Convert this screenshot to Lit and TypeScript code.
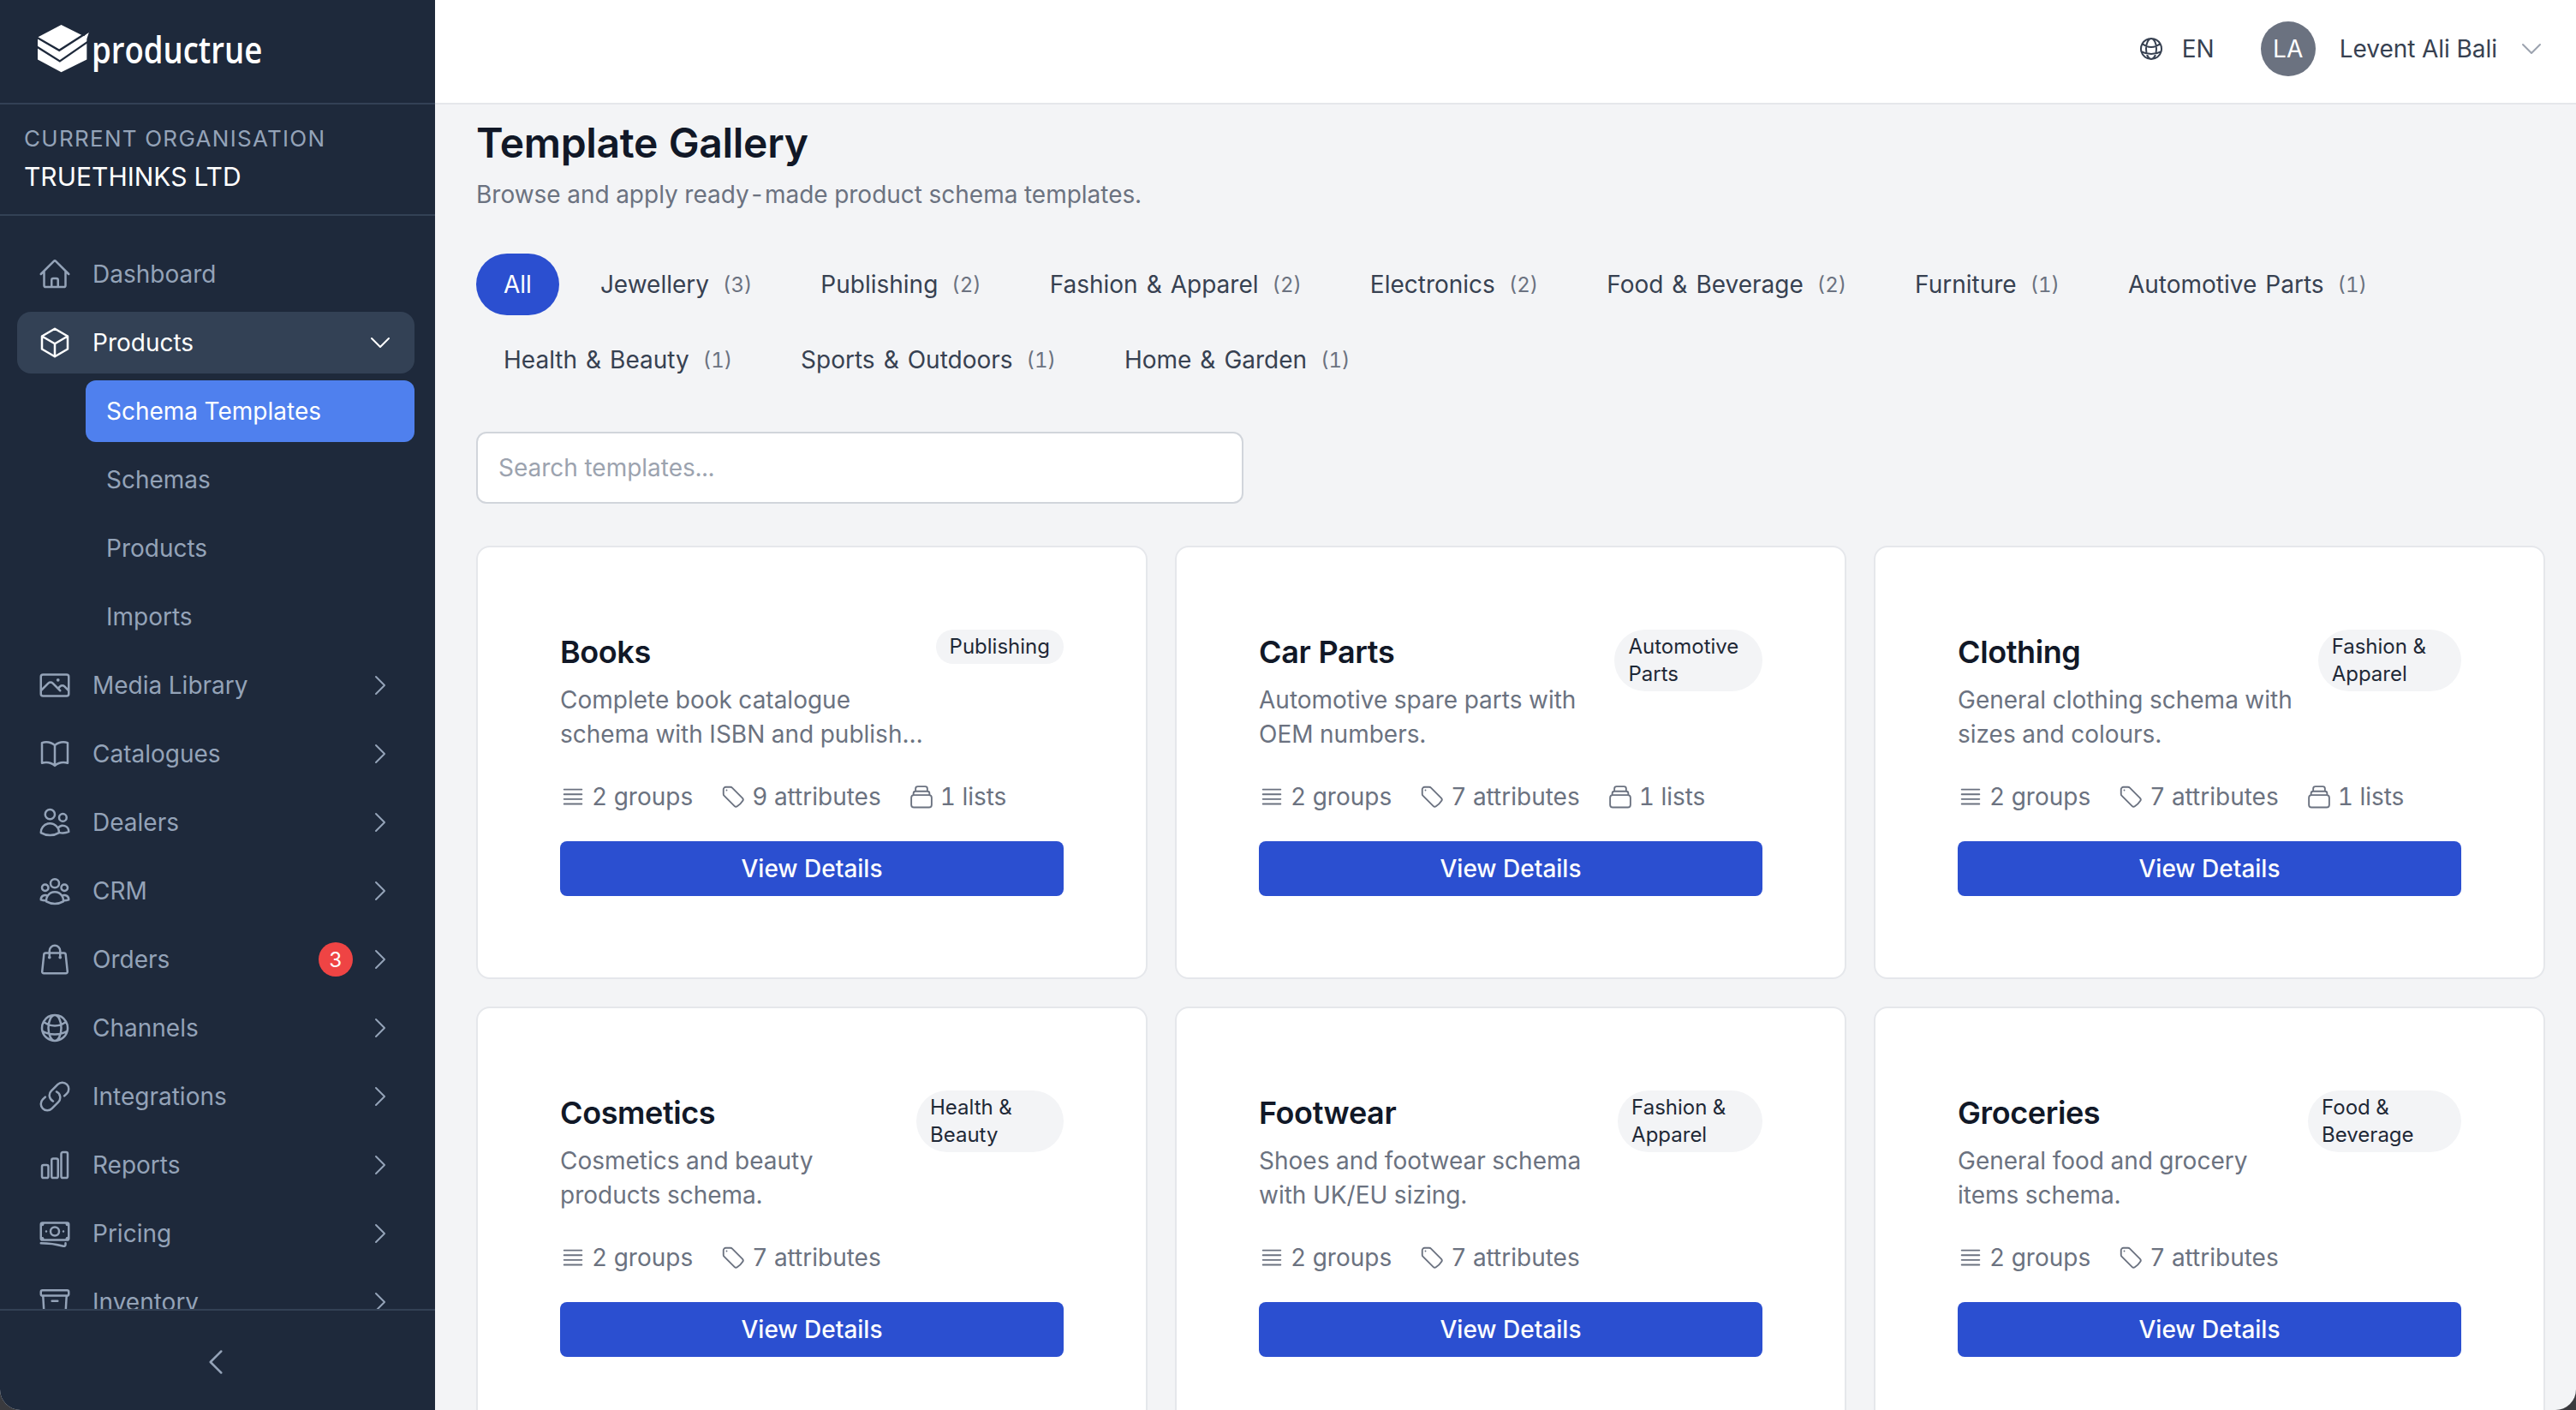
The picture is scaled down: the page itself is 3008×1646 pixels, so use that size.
import { LitElement, html, css, svg } from "lit";
import { customElement } from "lit/decorators.js";

const P: Record<string, string> = {
  home: "m2.25 12 8.954-8.955c.44-.439 1.152-.439 1.591 0L21.75 12M4.5 9.75v10.125c0 .621.504 1.125 1.125 1.125H9.75v-4.875c0-.621.504-1.125 1.125-1.125h2.25c.621 0 1.125.504 1.125 1.125V21h4.125c.621 0 1.125-.504 1.125-1.125V9.75M8.25 21h8.25",
  cube: "m21 7.5-9-5.25L3 7.5m18 0-9 5.25m9-5.25v9l-9 5.25M3 7.5l9 5.25M3 7.5v9l9 5.25m0-9v9",
  photo: "m2.25 15.75 5.159-5.159a2.25 2.25 0 0 1 3.182 0l5.159 5.159m-1.5-1.5 1.409-1.409a2.25 2.25 0 0 1 3.182 0l2.909 2.909m-18 3.75h16.5a1.5 1.5 0 0 0 1.5-1.5V6a1.5 1.5 0 0 0-1.5-1.5H3.75A1.5 1.5 0 0 0 2.25 6v12a1.5 1.5 0 0 0 1.5 1.5Zm10.5-11.25h.008v.008h-.008V8.25Zm.375 0a.375.375 0 1 1-.75 0 .375.375 0 0 1 .75 0Z",
  book: "M12 6.042A8.967 8.967 0 0 0 6 3.75c-1.052 0-2.062.18-3 .512v14.25A8.987 8.987 0 0 1 6 18c2.305 0 4.408.867 6 2.292m0-14.25a8.966 8.966 0 0 1 6-2.292c1.052 0 2.062.18 3 .512v14.25A8.987 8.987 0 0 0 18 18a8.967 8.967 0 0 0-6 2.292m0-14.25v14.25",
  users: "M15 19.128a9.38 9.38 0 0 0 2.625.372 9.337 9.337 0 0 0 4.121-.952 4.125 4.125 0 0 0-7.533-2.493M15 19.128v-.003c0-1.113-.285-2.16-.786-3.07M15 19.128v.106A12.318 12.318 0 0 1 8.624 21c-2.331 0-4.512-.645-6.374-1.766l-.001-.109a6.375 6.375 0 0 1 11.964-3.07M12 6.375a3.375 3.375 0 1 1-6.75 0 3.375 3.375 0 0 1 6.75 0Zm8.25 2.25a2.625 2.625 0 1 1-5.25 0 2.625 2.625 0 0 1 5.25 0Z",
  group: "M18 18.72a9.094 9.094 0 0 0 3.741-.479 3 3 0 0 0-4.682-2.72m.94 3.198.001.031c0 .225-.012.447-.037.666A11.944 11.944 0 0 1 12 21c-2.17 0-4.207-.576-5.963-1.584A6.062 6.062 0 0 1 6 18.719m12 0a5.971 5.971 0 0 0-.941-3.197m0 0A5.995 5.995 0 0 0 12 12.75a5.995 5.995 0 0 0-5.058 2.772m0 0a3 3 0 0 0-4.681 2.72 8.986 8.986 0 0 0 3.74.477m.94-3.197a5.971 5.971 0 0 0-.94 3.197M15 6.75a3 3 0 1 1-6 0 3 3 0 0 1 6 0Zm6 3a2.25 2.25 0 1 1-4.5 0 2.25 2.25 0 0 1 4.5 0Zm-13.5 0a2.25 2.25 0 1 1-4.5 0 2.25 2.25 0 0 1 4.5 0Z",
  bag: "M15.75 10.5V6a3.75 3.75 0 1 0-7.5 0v4.5m11.356-1.993 1.263 12c.07.665-.45 1.243-1.119 1.243H4.25a1.125 1.125 0 0 1-1.12-1.243l1.264-12A1.125 1.125 0 0 1 5.513 7.5h12.974c.576 0 1.059.435 1.119 1.007ZM8.625 10.5a.375.375 0 1 1-.75 0 .375.375 0 0 1 .75 0Zm7.5 0a.375.375 0 1 1-.75 0 .375.375 0 0 1 .75 0Z",
  globe: "M12 21a9.004 9.004 0 0 0 8.716-6.747M12 21a9.004 9.004 0 0 1-8.716-6.747M12 21c2.485 0 4.5-4.03 4.5-9S14.485 3 12 3m0 18c-2.485 0-4.5-4.03-4.5-9S9.515 3 12 3m0 0a8.997 8.997 0 0 1 7.843 4.582M12 3a8.997 8.997 0 0 0-7.843 4.582m15.686 0A11.953 11.953 0 0 1 12 10.5c-2.998 0-5.74-1.1-7.843-2.918m15.686 0A8.959 8.959 0 0 1 21 12c0 .778-.099 1.533-.284 2.253m0 0A17.919 17.919 0 0 1 12 16.5c-3.162 0-6.133-.815-8.716-2.247m0 0A9.015 9.015 0 0 1 3 12c0-1.605.42-3.113 1.157-4.418",
  link: "M13.19 8.688a4.5 4.5 0 0 1 1.242 7.244l-4.5 4.5a4.5 4.5 0 0 1-6.364-6.364l1.757-1.757m13.35-.622 1.757-1.757a4.5 4.5 0 0 0-6.364-6.364l-4.5 4.5a4.5 4.5 0 0 0 1.242 7.244",
  chart: "M3 13.125C3 12.504 3.504 12 4.125 12h2.25c.621 0 1.125.504 1.125 1.125v6.75C7.5 20.496 6.996 21 6.375 21h-2.25A1.125 1.125 0 0 1 3 19.875v-6.75ZM9.75 8.625c0-.621.504-1.125 1.125-1.125h2.25c.621 0 1.125.504 1.125 1.125v11.25c0 .621-.504 1.125-1.125 1.125h-2.25a1.125 1.125 0 0 1-1.125-1.125V8.625ZM16.5 4.125c0-.621.504-1.125 1.125-1.125h2.25C20.496 3 21 3.504 21 4.125v15.75c0 .621-.504 1.125-1.125 1.125h-2.25a1.125 1.125 0 0 1-1.125-1.125V4.125Z",
  money: "M2.25 18.75a60.07 60.07 0 0 1 15.797 2.101c.727.198 1.453-.342 1.453-1.096V18.75M3.75 4.5v.75A.75.75 0 0 1 3 6h-.75m0 0v-.375c0-.621.504-1.125 1.125-1.125H20.25M2.25 6v9m18-10.5v.75c0 .414.336.75.75.75h.75m-1.5-1.5h.375c.621 0 1.125.504 1.125 1.125v9.75c0 .621-.504 1.125-1.125 1.125h-.375m1.5-1.5H21a.75.75 0 0 0-.75.75v.75m0 0H3.75m0 0h-.375a1.125 1.125 0 0 1-1.125-1.125V15m1.5 1.5v-.75A.75.75 0 0 0 3 15h-.75M15 10.5a3 3 0 1 1-6 0 3 3 0 0 1 6 0Zm3 0h.008v.008H18V10.5Zm-12 0h.008v.008H6V10.5Z",
  archive: "m20.25 7.5-.625 10.632a2.25 2.25 0 0 1-2.247 2.118H6.622a2.25 2.25 0 0 1-2.247-2.118L3.75 7.5M10 11.25h4M3.375 7.5h17.25c.621 0 1.125-.504 1.125-1.125v-1.5c0-.621-.504-1.125-1.125-1.125H3.375c-.621 0-1.125.504-1.125 1.125v1.5c0 .621.504 1.125 1.125 1.125Z",
  tag: "M9.568 3H5.25A2.25 2.25 0 0 0 3 5.25v4.318c0 .597.237 1.17.659 1.591l9.581 9.581c.699.699 1.78.872 2.607.33a18.095 18.095 0 0 0 5.223-5.223c.542-.827.369-1.908-.33-2.607L11.16 3.66A2.25 2.25 0 0 0 9.568 3ZM6 6h.008v.008H6V6Z",
  bars: "M3.75 5.25h16.5m-16.5 4.5h16.5m-16.5 4.5h16.5m-16.5 4.5h16.5",
  stack: "M6.5 7V4.5a2 2 0 0 1 2-2h7a2 2 0 0 1 2 2V7M6.5 7h11M4.5 10.5V9a2 2 0 0 1 2-2h11a2 2 0 0 1 2 2v1.5M5 10.5h14a2.5 2.5 0 0 1 2.5 2.5v6.5a2.5 2.5 0 0 1-2.5 2.5H5a2.5 2.5 0 0 1-2.5-2.5V13a2.5 2.5 0 0 1 2.5-2.5Z",
  right: "m8.25 4.5 7.5 7.5-7.5 7.5",
  down: "m19.5 8.25-7.5 7.5-7.5-7.5",
  left: "M15.75 19.5 8.25 12l7.5-7.5",
};

const icon = (name: string, cls = "") => html`<svg class="ic ${cls}" viewBox="0 0 24 24" fill="none" stroke="currentColor" stroke-width="1.5" stroke-linecap="round" stroke-linejoin="round">${svg`<path d=${P[name]}></path>`}</svg>`;

const NAV_AFTER = [
  { i: "photo", t: "Media Library" },
  { i: "book", t: "Catalogues" },
  { i: "users", t: "Dealers" },
  { i: "group", t: "CRM" },
  { i: "bag", t: "Orders", badge: "3" },
  { i: "globe", t: "Channels" },
  { i: "link", t: "Integrations" },
  { i: "chart", t: "Reports" },
  { i: "money", t: "Pricing" },
  { i: "archive", t: "Inventory" },
];

const FILTERS = [
  ["Jewellery", 3], ["Publishing", 2], ["Fashion & Apparel", 2], ["Electronics", 2], ["Food & Beverage", 2],
  ["Furniture", 1], ["Automotive Parts", 1], ["Health & Beauty", 1], ["Sports & Outdoors", 1], ["Home & Garden", 1],
] as const;

const CARDS = [
  { t: "Books", c: "Publishing", d: "Complete book catalogue schema with ISBN and publish…", a: 9, l: 1 },
  { t: "Car Parts", c: "Automotive Parts", d: "Automotive spare parts with OEM numbers.", a: 7, l: 1 },
  { t: "Clothing", c: "Fashion & Apparel", d: "General clothing schema with sizes and colours.", a: 7, l: 1 },
  { t: "Cosmetics", c: "Health & Beauty", d: "Cosmetics and beauty products schema.", a: 7, l: 0 },
  { t: "Footwear", c: "Fashion & Apparel", d: "Shoes and footwear schema with UK/EU sizing.", a: 7, l: 0 },
  { t: "Groceries", c: "Food & Beverage", d: "General food and grocery items schema.", a: 7, l: 0 },
];

@customElement("app-root")
export class AppRoot extends LitElement {
  static styles = css`
    :host { display: block; width: 3008px; height: 1646px; background: #3a3a3e; font-family: Inter, "Liberation Sans", sans-serif; font-variant-numeric: tabular-nums; overflow: hidden; }
    * { box-sizing: border-box; }
    .ic { display: block; flex: none; width: 40px; height: 40px; }
    .shell { display: flex; height: 100%; border-radius: 0 0 24px 24px; overflow: hidden; background: #f3f4f6; }
    .side { width: 508px; flex: none; background: #1e293b; display: flex; flex-direction: column; }
    .brand { height: 122px; flex: none; border-bottom: 2px solid #334155; display: flex; align-items: center; padding-left: 43px; padding-bottom: 6px; gap: 2px; }
    .logo { width: 62px; height: 58px; flex: none; }
    .word { color: #fff; font-family: "Open Sans", sans-serif; font-weight: 600; font-size: 44px; line-height: 56px; display: inline-block; transform: scaleX(.83); transform-origin: left center; }
    .org { height: 130px; flex: none; border-bottom: 2px solid #334155; padding: 22px 28px 0; }
    .org-label { font-size: 26px; line-height: 36px; letter-spacing: 1.3px; color: #94a3b8; text-transform: uppercase; }
    .org-name { font-size: 30px; line-height: 40px; margin-top: 6px; color: #fff; text-transform: uppercase; }
    .nav { flex: 1; min-height: 0; overflow: hidden; padding: 32px 24px 0 20px; display: flex; flex-direction: column; gap: 8px; }
    .item { flex: none; height: 72px; display: flex; align-items: center; padding: 0 24px; gap: 24px; border-radius: 16px; color: #94a3b8; font-size: 28px; }
    .item .lbl { flex: 1; }
    .item.open { background: #334155; color: #fff; }
    .chev { width: 32px; height: 32px; }
    .badge { width: 40px; height: 40px; border-radius: 50%; background: #ef4444; color: #fff; font-size: 24px; display: flex; align-items: center; justify-content: center; margin-right: -8px; }
    .sub { flex: none; height: 72px; margin-left: 80px; padding: 0 24px; display: flex; align-items: center; border-radius: 12px; color: #94a3b8; font-size: 28px; }
    .sub.on { background: #4f80ee; color: #fff; }
    .foot { height: 118px; flex: none; border-top: 2px solid #334155; display: flex; align-items: center; justify-content: center; color: #94a3b8; padding: 4px 4px 0 0; }
    .main { flex: 1; min-width: 0; display: flex; flex-direction: column; }
    .top { height: 122px; flex: none; background: #fff; border-bottom: 2px solid #e5e7eb; display: flex; align-items: center; justify-content: flex-end; padding: 0 36px 6px 0; color: #374151; font-size: 28px; }
    .lang { display: flex; align-items: center; gap: 20px; margin-right: 54px; }
    .lang .ic { width: 32px; height: 32px; }
    .avatar { width: 64px; height: 64px; border-radius: 50%; background: #6b7280; color: #fff; display: flex; align-items: center; justify-content: center; margin-right: 28px; }
    .user-chev { width: 32px; height: 32px; color: #9ca3af; margin-left: 24px; }
    .content { flex: 1; min-height: 0; overflow: hidden; padding: 13px 36px 0 48px; }
    h1 { margin: 0; font-size: 48px; line-height: 64px; font-weight: 600; color: #111827; letter-spacing: -.3px; }
    .subtitle { margin: 8px 0 0; font-size: 28px; line-height: 40px; color: #6b7280; }
    .filters { display: flex; flex-wrap: wrap; gap: 16px; margin-top: 49px; }
    .pill { height: 72px; border-radius: 36px; padding: 0 32px; display: flex; align-items: center; gap: 16px; color: #374151; font-size: 28px; word-spacing: 2.5px; }
    .pill.on { background: #2b4fd0; color: #fff; }
    .pill small { font-size: 24px; color: #6b7280; }
    .search { width: 896px; height: 84px; margin-top: 48px; border: 2px solid #d1d5db; border-radius: 12px; background: #fff; padding: 0 24px; display: flex; align-items: center; color: #9ca3af; font-size: 28px; }
    .grid { display: grid; grid-template-columns: repeat(3, 1fr); gap: 32px; margin-top: 49px; }
    .card { height: 506px; background: #fff; border: 2px solid #e5e7eb; border-radius: 16px; padding: 96px; }
    .head { display: flex; justify-content: space-between; align-items: flex-start; }
    .tt { min-width: 0; }
    h3 { margin: 6px 0 0; font-size: 36px; line-height: 40px; font-weight: 600; color: #111827; letter-spacing: -.4px; }
    .desc { margin-top: 16px; font-size: 28px; line-height: 40px; color: #6b7280; }
    .chip { background: #f3f4f6; border-radius: 36px; padding: 4px 16px; font-size: 24px; line-height: 32px; color: #1f2937; }
    .meta { display: flex; gap: 32px; margin-top: 33px; color: #6b7280; font-size: 28px; line-height: 40px; }
    .meta span { display: flex; align-items: center; gap: 7px; }
    .meta .ic { width: 30px; height: 30px; }
    .btn { height: 64px; margin-top: 32px; background: #2b4fd0; border-radius: 8px; color: #fff; font-size: 28px; font-weight: 500; display: flex; align-items: center; justify-content: center; }
  `;

  logo() {
    return html`<svg class="logo" viewBox="40 25 185 175">
      <polygon fill="#fff" points="125,28 205,68 224,50 215,78 215,150 125,195 42,150 42,72"></polygon>
      <path d="M38 72 L118 118 L224 50" fill="none" stroke="#1e293b" stroke-width="7"></path>
      <path d="M40 106 L120 156 L218 88" fill="none" stroke="#1e293b" stroke-width="7"></path>
    </svg>`;
  }

  render() {
    return html`<div class="shell">
      <aside class="side">
        <div class="brand">${this.logo()}<span class="word">productrue</span></div>
        <div class="org">
          <div class="org-label">Current Organisation</div>
          <div class="org-name">Truethinks Ltd</div>
        </div>
        <nav class="nav">
          <div class="item">${icon("home")}<span class="lbl">Dashboard</span></div>
          <div class="item open">${icon("cube")}<span class="lbl">Products</span>${icon("down", "chev")}</div>
          <div class="sub on">Schema Templates</div>
          <div class="sub">Schemas</div>
          <div class="sub">Products</div>
          <div class="sub">Imports</div>
          ${NAV_AFTER.map(n => html`<div class="item">${icon(n.i)}<span class="lbl">${n.t}</span>${n.badge ? html`<span class="badge">${n.badge}</span>` : ""}${icon("right", "chev")}</div>`)}
        </nav>
        <div class="foot">${icon("left")}</div>
      </aside>
      <div class="main">
        <header class="top">
          <div class="lang">${icon("globe")}<span>EN</span></div>
          <div class="avatar">LA</div>
          <span>Levent Ali Bali</span>
          ${icon("down", "user-chev")}
        </header>
        <section class="content">
          <h1>Template Gallery</h1>
          <p class="subtitle">Browse and apply ready-made product schema templates.</p>
          <div class="filters">
            <div class="pill on">All</div>
            ${FILTERS.map(([n, c]) => html`<div class="pill">${n}<small>(${c})</small></div>`)}
          </div>
          <div class="search">Search templates...</div>
          <div class="grid">
            ${CARDS.map(c => html`<article class="card">
              <div class="head">
                <div class="tt"><h3>${c.t}</h3><div class="desc">${c.d}</div></div>
                <span class="chip">${c.c}</span>
              </div>
              <div class="meta">
                <span>${icon("bars")}2 groups</span>
                <span>${icon("tag")}${c.a} attributes</span>
                ${c.l ? html`<span>${icon("stack")}${c.l} lists</span>` : ""}
              </div>
              <div class="btn">View Details</div>
            </article>`)}
          </div>
        </section>
      </div>
    </div>`;
  }
}
